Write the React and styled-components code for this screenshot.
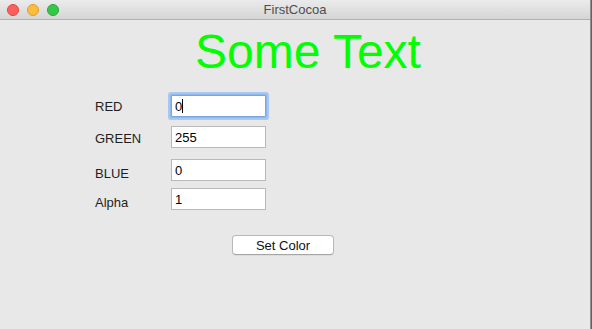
import React from "react";
import styled, { createGlobalStyle } from "styled-components";

const Global = createGlobalStyle`
  html, body {
    margin: 0;
    padding: 0;
    background: #5b6470;
  }
  * {
    box-sizing: border-box;
  }
`;

const Window = styled.div`
  width: 591px;
  height: 329px;
  background: #e8e8e8;
  border-right: 1px solid #8e8e8e;
  display: flex;
  flex-direction: column;
  font-family: "Liberation Sans", Arial, sans-serif;
`;

const TitleBar = styled.div`
  height: 20px;
  flex-shrink: 0;
  background: linear-gradient(#ebebeb, #d5d5d5);
  border-bottom: 1px solid #b1b1b1;
  display: flex;
  align-items: center;
  position: relative;
  padding-left: 7px;
  gap: 8px;
`;

const Light = styled.span`
  width: 12px;
  height: 12px;
  border-radius: 50%;
  background: ${(p) => p.$color};
  border: 1px solid ${(p) => p.$edge};
`;

const Title = styled.div`
  position: absolute;
  left: 0;
  right: 0;
  top: 0;
  height: 19px;
  line-height: 19px;
  text-align: center;
  font-size: 13px;
  color: #4d4d4d;
`;

const Content = styled.div`
  flex: 1;
  display: flex;
  flex-direction: column;
`;

const Heading = styled.h1`
  margin: 8px 0 0 26px;
  font-weight: normal;
  font-size: 48px;
  line-height: 47px;
  text-align: center;
  color: #00ff00;
`;

const Form = styled.div`
  margin-top: 20px;
  padding-left: 95px;
  display: flex;
  flex-direction: column;
`;

const Row = styled.div`
  display: grid;
  grid-template-columns: 76px 95px;
  align-items: center;
  margin-top: ${(p) => p.$gap}px;
  height: 22px;
`;

const Label = styled.label`
  font-size: 13px;
  color: #1e1e1e;
  position: relative;
  top: ${(p) => p.$shift || 0}px;
`;

const FieldWrap = styled.div`
  position: relative;
  width: 95px;
  height: 22px;
`;

const Field = styled.input`
  width: 95px;
  height: 22px;
  border: 1px solid #b9b9b9;
  background: #fff;
  font-family: "Liberation Sans", Arial, sans-serif;
  font-size: 13px;
  color: #000;
  padding: 0 0 0 3px;
  outline: none;
  box-shadow: ${(p) =>
    p.$focused ? "0 0 0 1px #8fb6ea, 0 0 0 3px #a9c8f1" : "none"};
  border-color: ${(p) => (p.$focused ? "#7aa6e2" : "#b9b9b9")};
  border-radius: ${(p) => (p.$focused ? "1px" : "0")};
`;

const Caret = styled.span`
  position: absolute;
  left: 11px;
  top: 4px;
  width: 1px;
  height: 14px;
  background: #000;
`;

const ButtonRow = styled.div`
  display: flex;
  justify-content: center;
  padding-right: 24px;
  margin-top: 25px;
`;

const Button = styled.button`
  width: 102px;
  height: 20px;
  border: 1px solid #b8b8b8;
  border-bottom-color: #a5a5a5;
  border-radius: 4px;
  background: #fff;
  font-family: "Liberation Sans", Arial, sans-serif;
  font-size: 13px;
  color: #111;
  padding: 0;
  box-shadow: 0 1px 0 rgba(0, 0, 0, 0.05);
`;

const fields = [
  { label: "RED", value: "0", gap: 0, shift: 0, focused: true },
  { label: "GREEN", value: "255", gap: 9, shift: 1 },
  { label: "BLUE", value: "0", gap: 11, shift: 3 },
  { label: "Alpha", value: "1", gap: 7, shift: 3 },
];

export default function App() {
  return (
    <>
      <Global />
      <Window>
        <TitleBar>
          <Light $color="#fc605c" $edge="#e1443f" />
          <Light $color="#fdbc40" $edge="#de9f2a" />
          <Light $color="#34c84a" $edge="#25a834" />
          <Title>FirstCocoa</Title>
        </TitleBar>
        <Content>
          <Heading>Some Text</Heading>
          <Form>
            {fields.map((f) => (
              <Row key={f.label} $gap={f.gap}>
                <Label $shift={f.shift}>{f.label}</Label>
                <FieldWrap>
                  <Field defaultValue={f.value} $focused={f.focused} readOnly />
                  {f.focused && <Caret />}
                </FieldWrap>
              </Row>
            ))}
          </Form>
          <ButtonRow>
            <Button>Set Color</Button>
          </ButtonRow>
        </Content>
      </Window>
    </>
  );
}
